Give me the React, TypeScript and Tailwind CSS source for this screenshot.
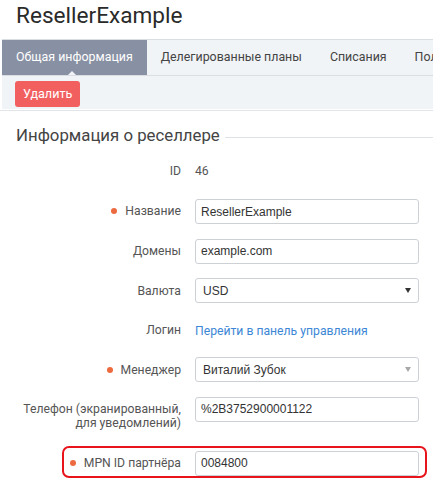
import React from "react";

const labelFont = { fontFamily: 'Roboto, "Open Sans", sans-serif' };

function Dot() {
  return <span className="inline-block w-[6px] h-[6px] rounded-full bg-[#ec6a3f] mr-[8px] align-middle relative top-[-1px]" />;
}

function Input({ value }: { value: string }) {
  return (
    <div className="w-[224px] h-[25px] border border-[#cdd1d6] rounded-[3px] bg-white flex items-center pl-[5px] text-[12px] text-[#333] font-['Liberation_Sans',sans-serif]">
      {value}
    </div>
  );
}

function Select({ value, muted }: { value: string; muted?: boolean }) {
  return (
    <div className="w-[224px] h-[25px] border border-[#cdd1d6] rounded-[3px] bg-white flex items-center justify-between pl-[7px] pr-[7px] text-[12px] text-[#333] font-['Liberation_Sans',sans-serif]">
      <span>{value}</span>
      <span
        className={
          "w-0 h-0 border-l-[3px] border-r-[3px] border-t-[5px] border-l-transparent border-r-transparent " +
          (muted ? "border-t-[#a8a8a8]" : "border-t-[#333]")
        }
      />
    </div>
  );
}

function Row({
  label,
  required,
  children,
  className = "",
}: {
  label: React.ReactNode;
  required?: boolean;
  children: React.ReactNode;
  className?: string;
}) {
  return (
    <div className={"flex items-center h-[25px] " + className}>
      <div className="w-[181px] text-right text-[12.2px] text-[#555] whitespace-nowrap">
        {required && <Dot />}
        {label}
      </div>
      <div className="ml-[14px]">{children}</div>
    </div>
  );
}

export default function App() {
  return (
    <div className="w-[433px] h-[489px] overflow-hidden bg-white relative" style={labelFont}>
      <div className="h-[39px] pl-[16px] text-[22.6px] leading-[32px] text-[#2a2a2a]">ResellerExample</div>
      <div className="ml-[2px] w-[480px]">
        <div className="flex h-[37px] bg-[#f1f4f7] border-t border-b border-[#dadee3] whitespace-nowrap">
          <div className="relative bg-[#8891a3] text-white text-[12.4px] px-[14px] flex items-center">
            Общая информация
            <span className="absolute left-[66px] bottom-0 w-0 h-0 border-l-[4px] border-r-[4px] border-b-[4px] border-l-transparent border-r-transparent border-b-[#f1f4f7]" />
          </div>
          <div className="text-[12.4px] text-[#444] px-[14px] flex items-center">Делегированные планы</div>
          <div className="text-[12.4px] text-[#444] px-[14px] flex items-center">Списания</div>
          <div className="text-[12.4px] text-[#444] px-[14px] flex items-center">Пользователи</div>
        </div>
        <div className="bg-[#f1f4f7] h-[33px] pt-[5px] pl-[13px]">
          <div className="inline-flex items-center h-[26px] px-[8px] rounded-[3px] bg-[#f25f5f] text-white text-[12.6px]">
            Удалить
          </div>
        </div>
      </div>
      <div className="border-t border-[#e1e4e8] mt-[1px]">
        <div className="flex items-center h-[48px] pl-[16px] pt-[2px]">
          <span className="text-[16.8px] text-[#444] whitespace-nowrap">Информация о реселлере</span>
          <div className="flex-1 h-px bg-[#dfe2e6] ml-[5px] mt-[2px]" />
        </div>
        <div className="flex items-center h-[25px]">
          <div className="w-[181px] text-right text-[12.2px] text-[#555]">ID</div>
          <div className="ml-[14px] text-[12.2px] text-[#555]">46</div>
        </div>
        <div className="flex flex-col gap-[14.6px] mt-[15px]">
          <Row label="Название" required>
            <Input value="ResellerExample" />
          </Row>
          <Row label="Домены">
            <Input value="example.com" />
          </Row>
          <Row label="Валюта">
            <Select value="USD" />
          </Row>
          <Row label="Логин">
            <span className="text-[12.2px] text-[#3d87d6]">Перейти в панель управления</span>
          </Row>
          <Row label="Менеджер" required>
            <Select value="Виталий Зубок" muted />
          </Row>
          <div className="flex items-start">
            <div className="w-[181px] text-right text-[12.2px] leading-[14px] text-[#555] pt-[5px] whitespace-nowrap">
              Телефон (экранированный,
              <br />
              для уведомлений)
            </div>
            <div className="ml-[14px]">
              <Input value="%2B3752900001122" />
            </div>
          </div>
        </div>
        <div className="relative mt-[21px]">
          <Row label="MPN ID партнёра" required>
            <Input value="0084800" />
          </Row>
          <div className="absolute left-[62px] top-[-5px] w-[365px] h-[32px] border-2 border-[#e8141c] rounded-[7px] pointer-events-none" />
        </div>
      </div>
    </div>
  );
}
